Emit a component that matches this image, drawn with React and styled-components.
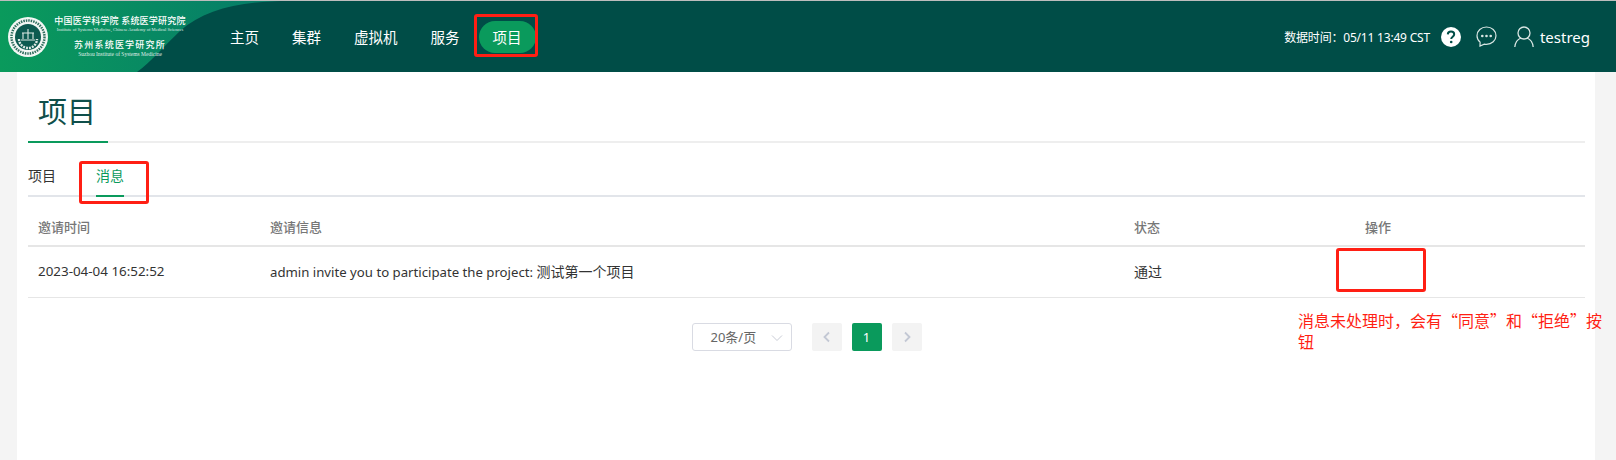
import styled, { createGlobalStyle } from "styled-components";

const GlobalStyle = createGlobalStyle`
  html, body {
    margin: 0;
    padding: 0;
    background: #f4f4f4;
    font-family: "Noto Sans", "Noto Sans CJK SC", sans-serif;
  }
  * { box-sizing: border-box; }
`;

const Page = styled.div`
  position: relative;
  width: 1616px;
  height: 460px;
  overflow: hidden;
`;

const Header = styled.header`
  position: relative;
  display: flex;
  align-items: center;
  height: 72px;
  border-top: 1px solid #bdbdbd;
  background: #004d47;
  color: #fff;
`;

const HeaderBg = styled.svg`
  position: absolute;
  left: 0;
  top: 0;
  width: 300px;
  height: 71px;
`;

const Logo = styled.div`
  position: relative;
  display: flex;
  align-items: center;
  gap: 6px;
  width: 216px;
  padding-left: 8px;
`;

const LogoText = styled.div`
  display: flex;
  flex-direction: column;
  align-items: center;
  width: 132px;
  font-family: "Liberation Serif", "Noto Sans CJK SC", serif;
  white-space: nowrap;
`;

const LogoTitle = styled.div`
  font-size: ${(p) => p.$size}px;
  font-weight: 500;
  line-height: 11px;
  letter-spacing: ${(p) => p.$spacing}px;
`;

const LogoSub = styled.div`
  font-size: ${(p) => p.$size}px;
  line-height: 6px;
  margin-bottom: ${(p) => p.$gap}px;
  opacity: 0.85;
`;

const Nav = styled.nav`
  position: relative;
  display: flex;
  align-items: center;
  gap: 5px;
`;

const NavItem = styled.a`
  display: block;
  padding: 0 14px;
  height: 32px;
  line-height: 32px;
  font-size: 14.5px;
  border-radius: 16px;
  white-space: nowrap;
  background: ${(p) => (p.$active ? "#0a9a5c" : "transparent")};
`;

const HeaderRight = styled.div`
  position: relative;
  display: flex;
  align-items: center;
  margin-left: auto;
  padding-right: 26px;
`;

const DataTime = styled.span`
  font-size: 12px;
  letter-spacing: -0.2px;
  margin-right: 11px;
  white-space: nowrap;
`;

const IconSlot = styled.span`
  display: flex;
  margin-right: ${(p) => p.$gap}px;
`;

const UserName = styled.span`
  font-size: 15px;
`;

const Content = styled.main`
  margin: 0 21px 0 17px;
  height: 388px;
  padding: 0 10px 0 11px;
  background: #fff;
`;

const TitleBar = styled.div`
  height: 71px;
  border-bottom: 2px solid #eeeeee;
`;

const Title = styled.h1`
  display: inline-block;
  width: 80px;
  height: 71px;
  margin: 0;
  padding: 18px 0 0 10px;
  font-size: 29px;
  font-weight: 400;
  line-height: 44px;
  color: #0f4f4a;
  border-bottom: 2px solid #0a9a5c;
`;

const Tabs = styled.div`
  display: flex;
  gap: 40px;
  height: 54px;
  border-bottom: 2px solid #e2e5ea;
`;

const Tab = styled.div`
  height: 54px;
  margin-bottom: -2px;
  padding-top: 22px;
  font-size: 14px;
  line-height: 22px;
  color: ${(p) => (p.$active ? "#0a9a5c" : "#333")};
  border-bottom: 2px solid ${(p) => (p.$active ? "#0a9a5c" : "transparent")};
`;

const Table = styled.table`
  width: 100%;
  border-collapse: collapse;
  table-layout: fixed;
`;

const HeadCell = styled.th`
  height: 49px;
  padding: 10px 0 0 10px;
  text-align: left;
  font-size: 13px;
  font-weight: 500;
  color: #777;
  border-bottom: 2px solid #e6e6e6;
`;

const Cell = styled.td`
  height: 51px;
  padding: 0 0 2px 10px;
  font-size: 14px;
  color: #333;
  border-bottom: 1px solid #e6e6e6;
`;

const Latin = styled.span`
  font-size: ${(p) => p.$size}px;
`;

const Pager = styled.div`
  display: flex;
  align-items: center;
  justify-content: center;
  gap: 10px;
  margin-top: 25px;
`;

const PageSelect = styled.div`
  position: relative;
  width: 100px;
  height: 28px;
  margin-right: 10px;
  padding-left: 18px;
  border: 1px solid #d9dbe3;
  border-radius: 3px;
  font-size: 13px;
  line-height: 26px;
  color: #666;
`;

const SelectArrow = styled.svg`
  position: absolute;
  right: 8px;
  top: 10px;
`;

const PageButton = styled.div`
  display: flex;
  align-items: center;
  justify-content: center;
  width: 30px;
  height: 28px;
  border-radius: 2px;
  font-size: 13px;
  color: ${(p) => (p.$active ? "#fff" : "#c3c8d4")};
  background: ${(p) => (p.$active ? "#0a9a5c" : "#f3f3f3")};
`;

const RedBox = styled.div`
  position: absolute;
  left: ${(p) => p.$x}px;
  top: ${(p) => p.$y}px;
  width: ${(p) => p.$w}px;
  height: ${(p) => p.$h}px;
  border: 3px solid #ff1f14;
  border-radius: 3px;
`;

const Note = styled.div`
  position: absolute;
  left: 1298px;
  top: 310px;
  width: 310px;
  font-family: "Noto Sans CJK SC", sans-serif;
  font-size: 16px;
  line-height: 21px;
  color: #ff1f14;
`;

function Chevron({ dir }) {
  return (
    <svg width="10" height="12" viewBox="0 0 10 12" fill="none" stroke="#c3c8d4" strokeWidth="1.8">
      <path d={dir === "left" ? "M7 1.5 2.5 6 7 10.5" : "M3 1.5 7.5 6 3 10.5"} />
    </svg>
  );
}

function Emblem() {
  return (
    <svg width="40" height="40" viewBox="0 0 40 40">
      <circle cx="20" cy="20" r="20" fill="#f3f7f4" />
      <circle cx="20" cy="20" r="16.5" fill="none" stroke="#2f6d5e" strokeWidth="2.5" strokeDasharray="1.5 1" />
      <circle cx="20" cy="20" r="13" fill="#0d5a50" />
      <path d="M11 22a9 9 0 0 0 18 0" fill="none" stroke="#dfe9e4" strokeWidth="2.4" strokeDasharray="2 1" />
      <path d="M14 16h12M15 16v6M25 16v6M20 12v10M13 23h14" stroke="#dfe9e4" strokeWidth="1.1" fill="none" />
    </svg>
  );
}

export default function App() {
  return (
    <Page>
      <GlobalStyle />
      <Header>
        <HeaderBg viewBox="0 0 300 71">
          <defs>
            <linearGradient id="logoGrad" x1="0" x2="1" y1="0" y2="0">
              <stop offset="0" stopColor="#0a9a5c" />
              <stop offset="1" stopColor="#067a69" />
            </linearGradient>
          </defs>
          <path d="M0 0H290C240 0 205 8 180 30C165 44 150 62 137 71H0Z" fill="url(#logoGrad)" />
        </HeaderBg>
        <Logo>
          <Emblem />
          <LogoText>
            <LogoTitle $size={9} $spacing={0.2}>中国医学科学院 系统医学研究院</LogoTitle>
            <LogoSub $size={4.5} $gap={7}>Institute of Systems Medicine, Chinese Academy of Medical Sciences</LogoSub>
            <LogoTitle $size={9} $spacing={1.2}>苏州系统医学研究所</LogoTitle>
            <LogoSub $size={5.5} $gap={0}>Suzhou Institute of Systems Medicine</LogoSub>
          </LogoText>
        </Logo>
        <Nav>
          <NavItem>主页</NavItem>
          <NavItem>集群</NavItem>
          <NavItem>虚拟机</NavItem>
          <NavItem>服务</NavItem>
          <NavItem $active>项目</NavItem>
        </Nav>
        <HeaderRight>
          <DataTime>数据时间：05/11 13:49 CST</DataTime>
          <IconSlot $gap={15}>
            <svg width="20" height="20" viewBox="0 0 20 20">
              <circle cx="10" cy="10" r="10" fill="#fff" />
              <path d="M6.8 7.4C6.9 5.5 8.3 4.6 10 4.6c1.9 0 3.2 1.1 3.2 2.7 0 2.4-3 2.4-3 4.8" fill="none" stroke="#004d47" strokeWidth="2" />
              <circle cx="10.2" cy="15" r="1.3" fill="#004d47" />
            </svg>
          </IconSlot>
          <IconSlot $gap={17}>
            <svg width="21" height="21" viewBox="0 0 21 21" fill="none" stroke="#d8e6e3" strokeWidth="1.2">
              <path d="M10.5 1C5.2 1 1 4.8 1 9.7c0 2.6 1.2 4.800 3.100 6.400L4 20l4.300-1.900c.7.1 1.400.2 2.200.2 5.300 0 9.500-3.800 9.500-8.600S15.800 1 10.500 1Z" />
              <circle cx="6.300" cy="10" r=".7" fill="#d8e6e3" />
              <circle cx="10.500" cy="10" r=".7" fill="#d8e6e3" />
              <circle cx="14.700" cy="10" r=".7" fill="#d8e6e3" />
            </svg>
          </IconSlot>
          <IconSlot $gap={6}>
            <svg width="20" height="21" viewBox="0 0 20 21" fill="none" stroke="#d8e6e3" strokeWidth="1.3">
              <circle cx="10" cy="7" r="6" />
              <path d="M.8 21c.5-4.800 3.500-8 6.200-9M19.200 21c-.5-4.800-3.500-8-6.200-9" />
            </svg>
          </IconSlot>
          <UserName>testreg</UserName>
        </HeaderRight>
      </Header>
      <Content>
        <TitleBar>
          <Title>项目</Title>
        </TitleBar>
        <Tabs>
          <Tab>项目</Tab>
          <Tab $active>消息</Tab>
        </Tabs>
        <Table>
          <colgroup>
            <col style={{ width: 232 }} />
            <col style={{ width: 864 }} />
            <col style={{ width: 231 }} />
            <col />
          </colgroup>
          <thead>
            <tr>
              <HeadCell>邀请时间</HeadCell>
              <HeadCell>邀请信息</HeadCell>
              <HeadCell>状态</HeadCell>
              <HeadCell>操作</HeadCell>
            </tr>
          </thead>
          <tbody>
            <tr>
              <Cell><Latin $size={13.4}>2023-04-04 16:52:52</Latin></Cell>
              <Cell><Latin $size={13.2}>admin invite you to participate the project: </Latin>测试第一个项目</Cell>
              <Cell>通过</Cell>
              <Cell />
            </tr>
          </tbody>
        </Table>
        <Pager>
          <PageSelect>
            20条/页
            <SelectArrow width="12" height="8" viewBox="0 0 12 8" fill="none" stroke="#c9ccd6">
              <path d="M1 1.500 6 6.500 11 1.500" />
            </SelectArrow>
          </PageSelect>
          <PageButton><Chevron dir="left" /></PageButton>
          <PageButton $active>1</PageButton>
          <PageButton><Chevron dir="right" /></PageButton>
        </Pager>
      </Content>
      <RedBox $x={474} $y={14} $w={64} $h={43} />
      <RedBox $x={79} $y={161} $w={70} $h={43} />
      <RedBox $x={1336} $y={248} $w={90} $h={44} />
      <Note>消息未处理时，会有“同意”和“拒绝”按钮</Note>
    </Page>
  );
}
